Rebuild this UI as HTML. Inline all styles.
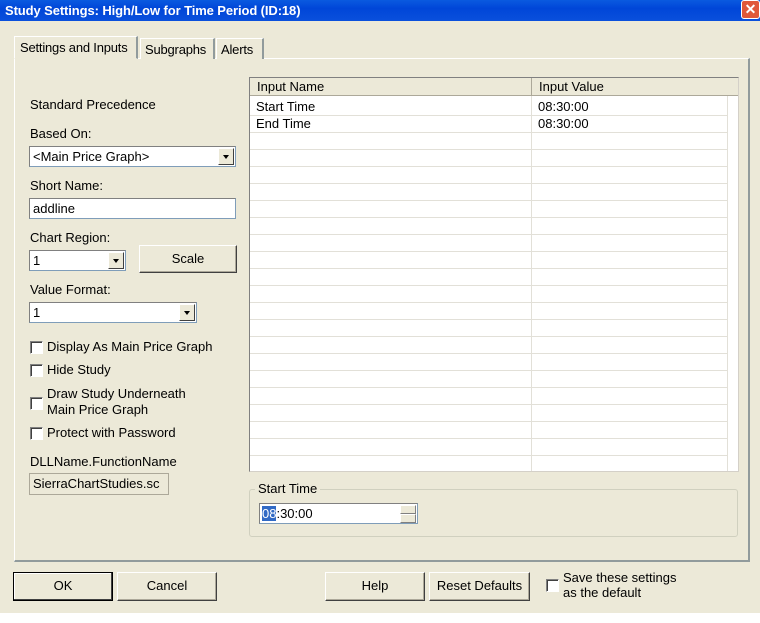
<!DOCTYPE html>
<html><head><style>
*{box-sizing:border-box;margin:0;padding:0}
body{width:760px;height:623px;background:#fff;font-family:"Liberation Sans",sans-serif;font-size:13px;color:#000;position:relative;overflow:hidden}
.a{position:absolute;white-space:nowrap}
.win{left:0;top:0;width:760px;height:613px;background:#ece9d8}
.title{left:0;top:0;width:760px;height:21px;background:linear-gradient(#0a5ae0,#0046d8 40%,#0a50dc);color:#fff;font-weight:bold;font-size:13px;padding:3px 0 0 5px;font-family:"Liberation Sans",sans-serif;letter-spacing:-0.1px}
.close{left:741px;top:0;width:19px;height:19px;background:#e0583a;border:1px solid #fff;border-radius:3px;color:#fff;font-weight:bold;text-align:center;line-height:16px;font-size:14px}
.panel{left:14px;top:58px;width:736px;height:504px;border:1px solid #fff;border-right:2px solid #919b9c;border-bottom:2px solid #919b9c}
.tab{top:38px;height:21px;border:1px solid #fff;border-right:2px solid #919b9c;border-bottom:none;padding:3px 4px 0;background:#ece9d8;letter-spacing:-0.2px}
.combo{background:#fff;border:1px solid #7f9db9;border-top-color:#808080;border-left-color:#808080;height:21px;padding:2px 3px}
.arr{position:absolute;right:1px;top:1px;width:16px;height:17px;background:#ece9d8;border:1px solid #fff;border-right-color:#404040;border-bottom-color:#404040}
.arr:after{content:"";position:absolute;left:4px;top:6px;border-left:3.5px solid transparent;border-right:3.5px solid transparent;border-top:4px solid #000}
.btn{height:29px;border:1px solid #fff;border-right-color:#404040;border-bottom-color:#404040;box-shadow:inset -1px -1px 0 #aca899;text-align:center;line-height:26px;background:#ece9d8}
.cb{width:13px;height:13px;background:#fff;border:1px solid #808080;border-right-color:#fff;border-bottom-color:#fff;box-shadow:inset 1px 1px 0 #404040}
.grid{left:249px;top:77px;width:490px;height:395px;background:#fff;border:1px solid #808080;border-right-color:#d4d0c8;border-bottom-color:#d4d0c8;overflow:hidden}
.hdr{top:0;height:18px;background:#ece9d8;border-right:1px solid #aca899;border-bottom:1px solid #aca899;padding:1px 0 0 7px}
</style></head><body>
<div class="a win"></div>
<div class="a title">Study Settings: High/Low for Time Period (ID:18)</div>
<div class="a close">✕</div>
<div class="a panel"></div>
<div class="a tab" style="left:14px;top:36px;height:23px;width:124px;border-bottom:1px solid #ece9d8;padding-left:5px">Settings and Inputs</div>
<div class="a tab" style="left:140px;width:75px">Subgraphs</div>
<div class="a tab" style="left:216px;width:48px">Alerts</div>

<div class="a" style="left:30px;top:97px">Standard Precedence</div>
<div class="a" style="left:30px;top:126px">Based On:</div>
<div class="a combo" style="left:29px;top:146px;width:207px">&lt;Main Price Graph&gt;<span class="arr"></span></div>
<div class="a" style="left:30px;top:178px">Short Name:</div>
<div class="a combo" style="left:29px;top:198px;width:207px">addline</div>
<div class="a" style="left:30px;top:230px">Chart Region:</div>
<div class="a combo" style="left:29px;top:250px;width:97px">1<span class="arr"></span></div>
<div class="a btn" style="left:139px;top:245px;width:98px;height:28px">Scale</div>
<div class="a" style="left:30px;top:282px">Value Format:</div>
<div class="a combo" style="left:29px;top:302px;width:168px">1<span class="arr"></span></div>

<div class="a cb" style="left:30px;top:341px"></div><div class="a" style="left:47px;top:339px">Display As Main Price Graph</div>
<div class="a cb" style="left:30px;top:364px"></div><div class="a" style="left:47px;top:362px">Hide Study</div>
<div class="a cb" style="left:30px;top:397px"></div><div class="a" style="left:47px;top:386px;line-height:16px">Draw Study Underneath<br>Main Price Graph</div>
<div class="a cb" style="left:30px;top:427px"></div><div class="a" style="left:47px;top:425px">Protect with Password</div>
<div class="a" style="left:30px;top:454px">DLLName.FunctionName</div>
<div class="a" style="left:29px;top:473px;width:140px;height:22px;border:1px solid #aca899;padding:2px 3px">SierraChartStudies.sc</div>

<div class="a grid">
 <div class="a" style="left:0;top:21px;width:478px;height:374px;background:repeating-linear-gradient(#fff 0,#fff 16px,#e2e0d8 16px,#e2e0d8 17px)"></div>
 <div class="a" style="left:281px;top:18px;width:1px;height:377px;background:#e2e0d8"></div>
 <div class="a" style="left:477px;top:18px;width:1px;height:377px;background:#e2e0d8"></div>
 <div class="a hdr" style="left:0;width:282px">Input Name</div>
 <div class="a hdr" style="left:282px;width:207px">Input Value</div>
 <div class="a" style="left:6px;top:21px">Start Time</div>
 <div class="a" style="left:288px;top:21px">08:30:00</div>
 <div class="a" style="left:6px;top:38px">End Time</div>
 <div class="a" style="left:288px;top:38px">08:30:00</div>
</div>

<div class="a" style="left:249px;top:489px;width:489px;height:48px;border:1px solid #d0d0bf;border-radius:3px"></div>
<div class="a" style="left:255px;top:481px;background:#ece9d8;padding:0 3px">Start Time</div>
<div class="a" style="left:259px;top:503px;width:159px;height:21px;background:#fff;border:1px solid #7f9db9;border-top-color:#808080;border-left-color:#808080;padding:2px 2px"><span style="background:#316ac5;color:#fff">08</span>:30:00</div>
<div class="a" style="left:400px;top:505px;width:16px;height:9px;background:#ece9d8;border:1px solid #fff;border-right-color:#808080;border-bottom-color:#808080"></div>
<div class="a" style="left:400px;top:514px;width:16px;height:9px;background:#ece9d8;border:1px solid #fff;border-right-color:#808080;border-bottom-color:#808080"></div>

<div class="a btn" style="left:13px;top:572px;width:100px;border:1px solid #000;box-shadow:inset -1px -1px 0 #404040,inset 1px 1px 0 #fff">OK</div>
<div class="a btn" style="left:117px;top:572px;width:100px">Cancel</div>
<div class="a btn" style="left:325px;top:572px;width:100px">Help</div>
<div class="a btn" style="left:429px;top:572px;width:101px">Reset Defaults</div>
<div class="a cb" style="left:546px;top:579px"></div>
<div class="a" style="left:563px;top:570px;line-height:15px">Save these settings<br>as the default</div>
</body></html>
